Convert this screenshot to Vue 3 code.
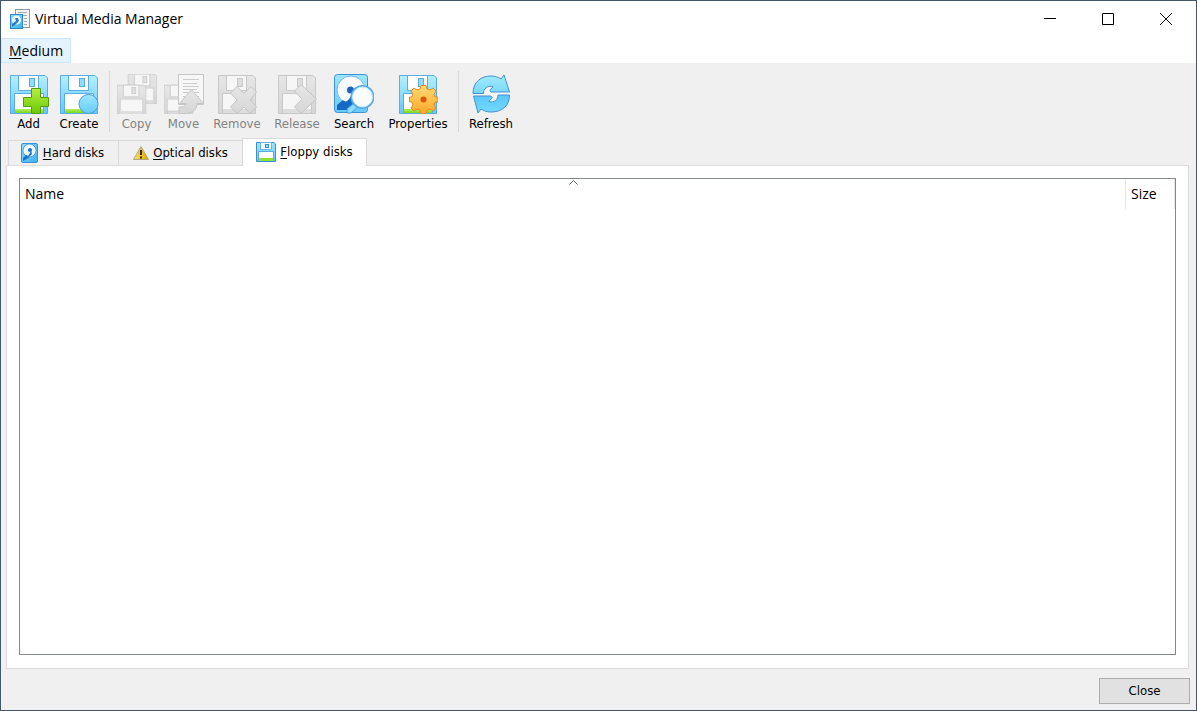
<script setup>
import { ref } from 'vue'

const tools = [
  { label: 'Add', icon: 'add', size: 'small' },
  { label: 'Create', icon: 'create', size: 'medium' },
  { separator: true },
  { label: 'Copy', icon: 'copy', size: 'small', disabled: true },
  { label: 'Move', icon: 'move', size: 'small', disabled: true },
  { label: 'Remove', icon: 'remove', size: 'large', disabled: true },
  { label: 'Release', icon: 'release', size: 'large', disabled: true },
  { label: 'Search', icon: 'search', size: 'medium' },
  { label: 'Properties', icon: 'properties', size: 'wide' },
  { separator: true },
  { label: 'Refresh', icon: 'refresh', size: 'regular' },
]

const tabs = [
  { id: 'hard', key: 'H', rest: 'ard disks' },
  { id: 'optical', key: 'O', rest: 'ptical disks' },
  { id: 'floppy', key: 'F', rest: 'loppy disks' },
]
const active = ref('floppy')
</script>

<template>
  <div class="window">
    <svg class="defs" aria-hidden="true">
      <defs>
        <linearGradient id="blue" x1="0" y1="0" x2="0" y2="1">
          <stop offset="0" stop-color="#b4f0ff" /><stop offset="1" stop-color="#62c8fc" />
        </linearGradient>
        <linearGradient id="grey" x1="0" y1="0" x2="0" y2="1">
          <stop offset="0" stop-color="#e6e6e6" /><stop offset="1" stop-color="#d6d6d6" />
        </linearGradient>
        <linearGradient id="green" x1="0" y1="0" x2="0" y2="1">
          <stop offset="0" stop-color="#b4ee3c" /><stop offset="1" stop-color="#6cca08" />
        </linearGradient>
        <linearGradient id="strip" x1="0" y1="0" x2="0" y2="1">
          <stop offset="0" stop-color="#b4f060" /><stop offset="1" stop-color="#78d818" />
        </linearGradient>
        <linearGradient id="gold" x1="0" y1="0" x2="0" y2="1">
          <stop offset="0" stop-color="#ffdc70" /><stop offset="1" stop-color="#ffa62c" />
        </linearGradient>
        <linearGradient id="swirl" x1="0" y1="0" x2="0" y2="1">
          <stop offset="0" stop-color="#a2ecfc" /><stop offset="1" stop-color="#78d8fa" />
        </linearGradient>
        <linearGradient id="swirl2" x1="0" y1="0" x2="0" y2="1">
          <stop offset="0" stop-color="#5ac6fc" /><stop offset="1" stop-color="#72dcff" />
        </linearGradient>
        <linearGradient id="drive" x1="0" y1="0" x2="1" y2="1">
          <stop offset="0" stop-color="#90dcfc" /><stop offset="1" stop-color="#38b0f4" />
        </linearGradient>
        <linearGradient id="drive-light" x1="0" y1="0" x2="0" y2="1">
          <stop offset="0" stop-color="#9ce6ff" /><stop offset="1" stop-color="#66ccfb" />
        </linearGradient>
        <linearGradient id="warn" x1="0" y1="0" x2="1" y2="0">
          <stop offset="0" stop-color="#fbe36a" /><stop offset="1" stop-color="#dba404" />
        </linearGradient>
      </defs>
      <symbol id="floppy" viewBox="0 0 40 40">
        <path class="f-body" d="M1.5 1.5H36L38.5 4V39.5H1.5Z" />
        <path class="f-paper" d="M9.5 1.500V16.500H29.500V1.500Z" />
        <rect class="f-hole" x="20.500" y="4.500" width="5" height="8" />
        <path class="f-paper" d="M5.500 19.500H34.500V39.500H5.500Z" />
        <rect class="f-strip" x="6" y="35" width="28" height="4" />
      </symbol>
      <symbol id="disk" viewBox="0 0 20 20">
        <rect x="2.500" y="0.500" width="16" height="19" rx="1.500" fill="url(#drive)" stroke="#3a8fd4" />
        <circle cx="10.500" cy="7.500" r="6.500" fill="#f2f9ff" stroke="#3a94de" stroke-width="0.800" />
        <circle cx="11" cy="7" r="2" fill="#1c72cc" />
        <path d="M12 7L13 11L8 16L4 18V15L7 12L9 13L11 10Z" fill="#1c72cc" />
      </symbol>
    </svg>

    <header class="titlebar">
      <svg class="app-icon" viewBox="0 0 20 20" aria-hidden="true">
        <rect x="5.500" y="0.500" width="14" height="18" fill="#f4f4f4" stroke="#93979c" />
        <path d="M8 3.500H17M12 6.500H17M14 9.500H17M14 12.500H17M14 15.500H17" stroke="#a5a9ad" />
        <rect x="0.500" y="5.500" width="12" height="14" fill="url(#drive)" stroke="#3286ce" />
        <circle cx="6.500" cy="11" r="4.500" fill="#eff8ff" />
        <path d="M5 9H8L9 12L6 15L2 18V15L6 12Z" fill="#287dcb" />
      </svg>
      <h1>Virtual Media Manager</h1>
      <div class="controls">
        <button aria-label="Minimize"><svg viewBox="0 0 12 12"><path d="M0 5.500H12" /></svg></button>
        <button aria-label="Maximize"><svg viewBox="0 0 12 12"><path d="M0.500 0.500H11.500V11.500H0.500Z" /></svg></button>
        <button aria-label="Close window"><svg viewBox="0 0 12 12"><path d="M0 0L12 12M12 0L0 12" /></svg></button>
      </div>
    </header>

    <nav class="menubar"><button><u>M</u>edium</button></nav>

    <div class="toolbar" role="toolbar">
      <template v-for="(t, i) in tools" :key="i">
        <span v-if="t.separator" class="separator"></span>
        <button v-else :class="['tool', t.size]" :disabled="t.disabled">
          <svg viewBox="0 0 40 40" aria-hidden="true">
            <use v-if="['add', 'create', 'remove', 'release', 'properties'].includes(t.icon)" href="#floppy" width="40" height="40" />
            <path v-if="t.icon === 'add'" d="M22.500 14.500H31.500V23.500H39.500V32.500H31.500V39.500H22.500V32.500H14.500V23.500H22.500Z" fill="url(#green)" stroke="#529e10" />
            <circle v-else-if="t.icon === 'create'" cx="29.500" cy="30" r="9.500" fill="url(#drive-light)" stroke="#4a9edc" />
            <g v-else-if="t.icon === 'copy'">
              <use href="#floppy" x="10" y="-1" width="31" height="31" />
              <use href="#floppy" x="-1" y="10" width="31" height="31" />
            </g>
            <g v-else-if="t.icon === 'move'" stroke="#c6c6c6">
              <use href="#floppy" x="-1" y="10" width="31" height="31" />
              <path d="M14.500 0.500H39.500V30.500H14.500Z" fill="#f7f7f7" />
              <path d="M19 5.500H35M19 9.500H33M19 12.500H35M19 15.500H33M19 18.500H35M19 22.500H35" stroke="#cccccc" />
              <path d="M27.500 15.500L39.500 29.500H33C33 36 28 39.500 21 39.500H15V33C20 33 22 32 22 29.500H15.500Z" fill="url(#grey)" />
            </g>
            <path v-else-if="t.icon === 'remove'" d="M20 12.500L27 19.500L34 12.500L39.500 18L33 26L39.500 33L33 39.500L27 33L20 39.500L13.500 33L20 26L13.500 19Z" fill="url(#grey)" stroke="#c6c6c6" />
            <path v-else-if="t.icon === 'release'" d="M24 10.500L39.500 25L24 39.500L17.500 33L25 25L17.500 17Z" fill="url(#grey)" stroke="#c6c6c6" />
            <g v-else-if="t.icon === 'search'">
              <rect x="0.500" y="0.500" width="33" height="38" rx="3" fill="url(#drive-light)" stroke="#3e91d4" />
              <circle cx="17" cy="16" r="14" fill="#f8fcff" stroke="#6eb8ec" />
              <path d="M3 31L9 26C12 29 14 27 17 22L20 18L22 28L14 36H3Z" fill="#1669c4" />
              <circle cx="16.500" cy="16" r="3.500" fill="#1b64bb" />
              <path d="M20 29L24 33L17 39H13V35Z" fill="#8cdcff" stroke="#4a9bda" />
              <circle cx="28.500" cy="23" r="11" fill="#fafeff" stroke="#5aaae4" stroke-width="2" />
              <circle cx="28.500" cy="23" r="10" fill="none" stroke="#c5edff" />
            </g>
            <g v-else-if="t.icon === 'properties'">
              <path d="M23 11.500H28L29 15L32 16L35 14L38 17L36 20.500L37 23H40V28H37L36 31L38 34L35 37L32 35L29 36L28 39.500H23L22 36L19 35L16 37L13 34L15 31L14 28H11.500V23H14L15 20L13 17L16 14L19 16L22 15Z" fill="url(#gold)" stroke="#e58a24" stroke-linejoin="round" />
              <circle cx="25.500" cy="25.500" r="3" fill="#e0530c" />
            </g>
            <g v-else-if="t.icon === 'refresh'" stroke="#4790cf" stroke-linejoin="round">
              <path d="M13 20L14 15L19 12L21 13L19 16L20 18H38V21H26L24 25L20 28L18 27L20 23L19 21H2V19Z" fill="#f6fafd" stroke="none" />
              <path d="M2 19.500C2 8 10 2 20 2C24 2 27 3 30 5L33 1L38.500 18H21C19 18 18 16 20 15L22 12.500C17 11 12 15 12.500 19.500Z" fill="url(#swirl)" />
              <path d="M38.500 21C38.500 32 31 38 20 38C16 38 13 37 10 35L7 39L2.500 22H19C21 22 22 24 20 25L18 27.500C23 29 27 26 27 21Z" fill="url(#swirl2)" />
            </g>
          </svg>
          <span>{{ t.label }}</span>
        </button>
      </template>
    </div>

    <main class="content">
      <div class="tabs" role="tablist">
        <button v-for="tab in tabs" :key="tab.id" role="tab" :aria-selected="active === tab.id"
          :class="['tab', tab.id, { active: active === tab.id }]" @click="active = tab.id">
          <svg v-if="tab.id === 'hard'" viewBox="0 0 20 20" aria-hidden="true"><use href="#disk" width="20" height="20" /></svg>
          <svg v-else-if="tab.id === 'optical'" class="warning" viewBox="0 0 16 16" aria-hidden="true">
            <path d="M8 1.500L15.500 14.500H0.500Z" fill="url(#warn)" stroke="#b5a678" stroke-linejoin="round" />
            <path d="M8 5V10M8 11.500V13.500" stroke="#332f1c" stroke-width="2" />
          </svg>
          <svg v-else viewBox="0 0 20 20" aria-hidden="true">
            <path d="M0.500 0.500H18L19.500 2V19.500H0.500Z" fill="url(#drive-light)" stroke="#3b8fd0" />
            <path d="M4.500 0.500H15.500V7.500H4.500Z" fill="#f4fbff" stroke="#67b7e8" />
            <rect x="9.500" y="2.500" width="3" height="3" fill="#9bdcff" stroke="#3b8fd0" />
            <path d="M2.500 9.500H17.500V18.500H2.500Z" fill="#fff" stroke="#5cabdf" />
            <path d="M3 16H17V19H3Z" fill="#90e038" />
          </svg>
          <span><u>{{ tab.key }}</u>{{ tab.rest }}</span>
        </button>
      </div>
      <section class="panel" role="tabpanel">
        <div class="tree">
          <table>
            <thead>
              <tr>
                <th class="name">Name<svg viewBox="0 0 9 5" aria-hidden="true"><path d="M0.500 4.500L4.500 0.500L8.500 4.500" /></svg></th>
                <th class="size">Size</th>
              </tr>
            </thead>
          </table>
        </div>
      </section>
    </main>

    <footer><button class="close">Close</button></footer>
  </div>
</template>

<style>
body { margin: 0; }
</style>

<style scoped>
.window {
  box-sizing: border-box;
  min-height: 100vh;
  display: flex;
  flex-direction: column;
  border: 1px solid #43566b;
  background: #f0f0f0;
  color: #000;
  font: 13px/16px "DejaVu Sans Condensed", "DejaVu Sans", sans-serif;
}
.defs { position: absolute; width: 0; height: 0; }
button {
  margin: 0;
  padding: 0;
  border: 0;
  background: none;
  color: inherit;
  font: inherit;
}
svg { display: block; flex: none; }
u { text-underline-offset: 2px; }

.titlebar {
  box-sizing: border-box;
  display: flex;
  align-items: center;
  height: 37px;
  padding: 0 1px 1px 9px;
  background: #fff;
}
.app-icon { width: 20px; height: 20px; }
h1 { flex: 1; margin: 0 0 0 5px; font: 14px/20px "Open Sans", "Noto Sans", sans-serif; }
.controls { display: flex; align-self: stretch; }
.controls button { width: 58px; display: flex; align-items: center; justify-content: center; }
.controls svg { width: 12px; height: 12px; fill: none; stroke: #000; }

.menubar { display: flex; background: #fff; }
.menubar button {
  box-sizing: border-box;
  height: 25px;
  padding: 1px 7px 0;
  border: 1px solid #cce8ff;
  background: #e5f3ff;
  font: 14px/22px "Open Sans", "Noto Sans", sans-serif;
}

.toolbar { display: flex; padding: 8px 4px 6px; }
.tool { display: flex; flex-direction: column; align-items: center; gap: 2px; padding-top: 3px; }
.tool svg { width: 40px; height: 40px; }
.tool { --body: url(#blue); --edge: #5aabe6; --paper: #fff; --hole: #90dcff; --strip: url(#strip); }
.tool:disabled { --body: url(#grey); --edge: #c8c8c8; --paper: #f6f6f6; --hole: #dedede; --strip: #dddddd; color: #838383; }
.f-body { fill: var(--body); stroke: var(--edge); }
.f-paper { fill: var(--paper); stroke: var(--edge); }
.f-hole { fill: var(--hole); stroke: var(--edge); }
.f-strip { fill: var(--strip); }
.small { width: 47px; }
.medium { width: 54px; }
.regular { width: 58px; }
.large { width: 60px; }
.wide { width: 74px; }
.separator { width: 1px; height: 61px; margin: 0 3px; background: #d8d8d8; }

.content { flex: 1; display: flex; flex-direction: column; padding: 0 7px 0 5px; }
.tabs { display: flex; align-items: flex-end; padding-left: 2px; height: 27px; }
.tab {
  box-sizing: border-box;
  height: 25px;
  display: flex;
  align-items: center;
  justify-content: center;
  gap: 4px;
  border: 1px solid #d9d9d9;
  border-bottom: 0;
}
.tab svg { width: 20px; height: 20px; }
.tab .warning { width: 16px; height: 16px; }
.hard { width: 110px; padding-right: 4px; border-right: 0; }
.optical { width: 124px; border-right: 0; }
.floppy { width: 125px; }
.tab.active { position: relative; z-index: 1; height: 28px; margin-bottom: -1px; padding-bottom: 2px; background: #fff; }
.panel { flex: 1; display: flex; padding: 12px 12px 13px; border: 1px solid #dcdcdc; background: #fff; }
.tree { flex: 1; border: 1px solid #828790; }
table { width: 100%; border-collapse: collapse; table-layout: fixed; }
th {
  position: relative;
  height: 30px;
  padding: 0 5px;
  text-align: left;
  font: 14px/20px "Open Sans", "Noto Sans", sans-serif;
}
.size { width: 38px; border-left: 1px solid #e5e5e5; border-right: 1px solid #e5e5e5; }
th svg { position: absolute; top: 1px; left: 50%; width: 9px; height: 5px; margin-left: -4px; fill: none; stroke: #5c5c5c; }

footer { display: flex; justify-content: flex-end; padding: 9px 6px 6px; }
.close {
  box-sizing: border-box;
  width: 91px;
  height: 26px;
  border: 1px solid #adadad;
  background: #e1e1e1;
}
</style>
